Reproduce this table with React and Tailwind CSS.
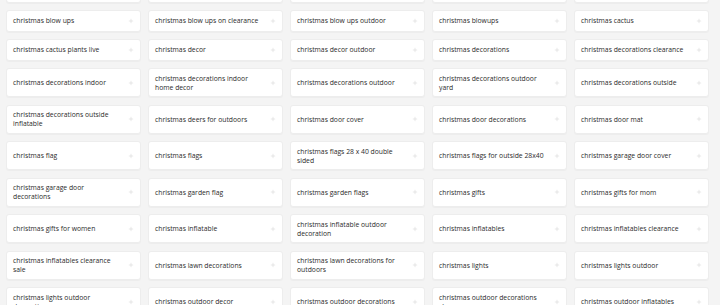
import { Plus } from "lucide-react";

const keywords = [
  "christmas blanket",
  "christmas blow up",
  "christmas blow up santa",
  "christmas blow up outdoor",
  "christmas blow up yard",
  "christmas blow ups",
  "christmas blow ups on clearance",
  "christmas blow ups outdoor",
  "christmas blowups",
  "christmas cactus",
  "christmas cactus plants live",
  "christmas decor",
  "christmas decor outdoor",
  "christmas decorations",
  "christmas decorations clearance",
  "christmas decorations indoor",
  "christmas decorations indoor home decor",
  "christmas decorations outdoor",
  "christmas decorations outdoor yard",
  "christmas decorations outside",
  "christmas decorations outside inflatable",
  "christmas deers for outdoors",
  "christmas door cover",
  "christmas door decorations",
  "christmas door mat",
  "christmas flag",
  "christmas flags",
  "christmas flags 28 x 40 double sided",
  "christmas flags for outside 28x40",
  "christmas garage door cover",
  "christmas garage door decorations",
  "christmas garden flag",
  "christmas garden flags",
  "christmas gifts",
  "christmas gifts for mom",
  "christmas gifts for women",
  "christmas inflatable",
  "christmas inflatable outdoor decoration",
  "christmas inflatables",
  "christmas inflatables clearance",
  "christmas inflatables clearance sale",
  "christmas lawn decorations",
  "christmas lawn decorations for outdoors",
  "christmas lights",
  "christmas lights outdoor",
  "christmas lights outdoor decorations",
  "christmas outdoor decor",
  "christmas outdoor decorations",
  "christmas outdoor decorations clearance",
  "christmas outdoor inflatables",
];

function KeywordCard({ text }) {
  return (
    <button className="flex min-h-[21.5px] items-center justify-between gap-[6px] rounded-[3px] border border-[#ededed] bg-white py-[4.5px] pl-[6px] pr-[6px] text-left shadow-[0_1px_1px_rgba(0,0,0,0.03)]">
      <span className="text-[6.8px] leading-[9px] text-[#2b2b2b]">{text}</span>
      <Plus className="h-[6px] w-[6px] shrink-0 text-[#c4c4c4]" strokeWidth={1.5} />
    </button>
  );
}

export default function App() {
  return (
    <div
      className="h-[305px] w-[720px] overflow-hidden bg-[#f4f4f4]"
      style={{ fontFamily: '"Open Sans", "Noto Sans", sans-serif' }}
    >
      <div className="ml-[6px] mt-[-19px] grid w-[703px] grid-cols-5 gap-x-[7px] gap-y-[7.5px]">
        {keywords.map((k) => (
          <KeywordCard key={k} text={k} />
        ))}
      </div>
    </div>
  );
}
